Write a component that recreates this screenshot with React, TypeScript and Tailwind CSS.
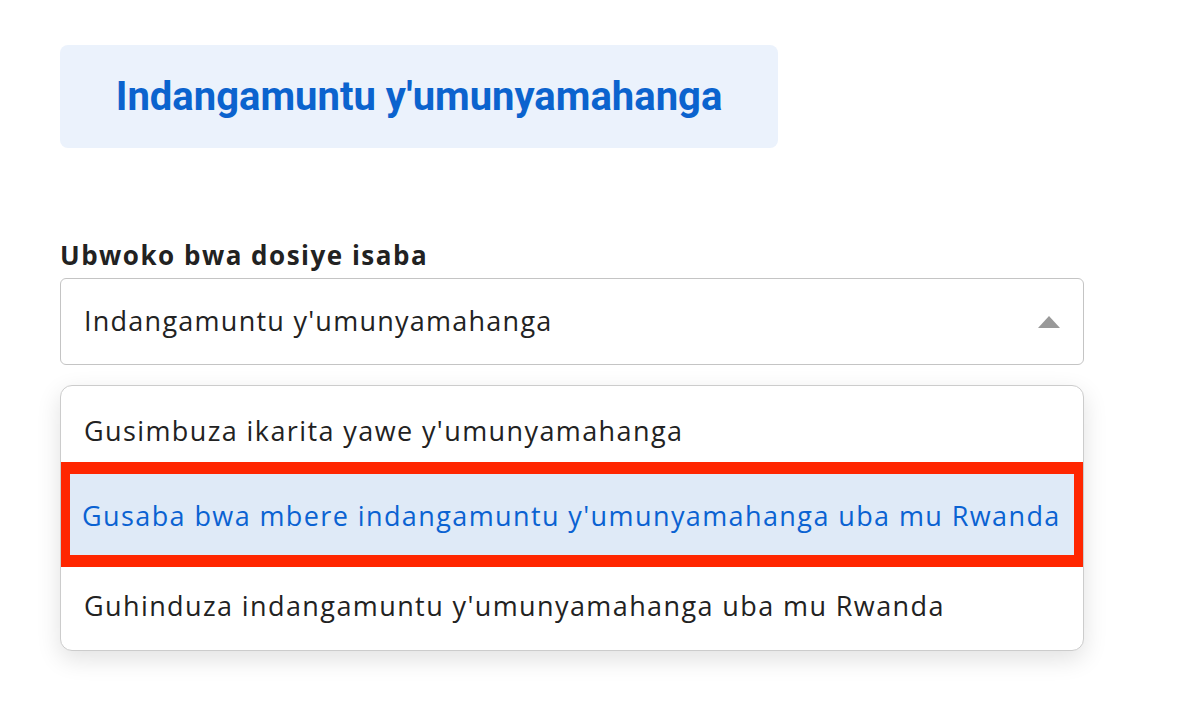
const options = [
  "Gusimbuza ikarita yawe y'umunyamahanga",
  "Gusaba bwa mbere indangamuntu y'umunyamahanga uba mu Rwanda",
  "Guhinduza indangamuntu y'umunyamahanga uba mu Rwanda",
]

export default function App() {
  return (
    <div className="min-h-screen bg-white pl-[60px] pt-[45px] font-['Open_Sans',sans-serif] text-[#222]">
      <div className="flex h-[103px] w-[718px] items-center justify-center rounded-lg bg-[#ebf2fc]">
        <h1 className="font-['Roboto',sans-serif] text-[40px] font-bold text-[#0b63ce]">
          Indangamuntu y'umunyamahanga
        </h1>
      </div>

      <div className="mt-[90px] w-[1024px]">
        <label className="block h-[40px] text-[26px] leading-[34px] font-bold tracking-[1.5px]">Ubwoko bwa dosiye isaba</label>

        <div className="flex h-[87px] items-center justify-between rounded-md border border-[#c4c4c4] pl-[23px] pr-[23px]">
          <span className="text-[27px] tracking-[1.25px]">Indangamuntu y'umunyamahanga</span>
          <svg width="22" height="12" viewBox="0 0 22 12">
            <polygon points="11,0 22,12 0,12" fill="#999" />
          </svg>
        </div>

        <ul className="mt-[20px] h-[266px] overflow-hidden rounded-xl border border-[#ccc] bg-white text-[27px] tracking-[1.4px] shadow-[0_8px_24px_rgba(0,0,0,0.12)]">
          <li className="h-[76px] pl-[23px] pt-[28px] leading-[34px]">{options[0]}</li>
          <li className="-mx-[3px] flex h-[105px] items-center border-[12px] border-[#ff2600] bg-[#dfeaf7] pl-[12px] pt-[4px] text-[#0a62d2]">
            {options[1]}
          </li>
          <li className="h-[84px] pl-[23px] pt-[22px] leading-[34px]">{options[2]}</li>
        </ul>
      </div>
    </div>
  )
}
